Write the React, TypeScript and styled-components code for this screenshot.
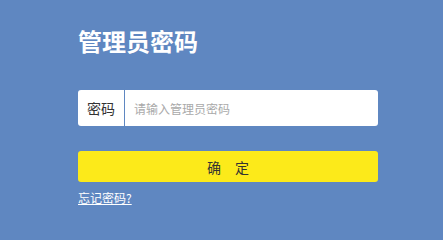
import styled, { createGlobalStyle } from "styled-components";

const GlobalStyle = createGlobalStyle`
  html, body {
    margin: 0;
    padding: 0;
    background-color: #5f87c1;
    font-family: "Noto Sans CJK SC", "Noto Sans", sans-serif;
  }
`;

const Page = styled.div`
  height: 236px;
  padding-left: 78px;
  box-sizing: border-box;
`;

const LoginPanel = styled.div`
  width: 300px;
  padding-top: 27px;
  display: flex;
  flex-direction: column;
  align-items: flex-start;
`;

const Title = styled.h1`
  margin: 0;
  font-size: 24px;
  line-height: 28px;
  font-weight: 700;
  color: #ffffff;
`;

const Field = styled.div`
  margin-top: 35px;
  width: 100%;
  height: 36px;
  display: flex;
  align-items: stretch;
  background-color: #ffffff;
  border-radius: 3px;
  overflow: hidden;
`;

const FieldLabel = styled.label`
  width: 46px;
  flex-shrink: 0;
  display: flex;
  align-items: center;
  justify-content: center;
  border-right: 1px solid #5f87c1;
  font-size: 14px;
  color: #333333;
`;

const PasswordInput = styled.input`
  flex: 1;
  border: none;
  outline: none;
  padding: 0 0 0 9px;
  font-family: inherit;
  font-size: 12px;
  color: #333333;
  background: transparent;

  &::placeholder {
    color: #a9a9a9;
  }
`;

const SubmitButton = styled.button`
  margin-top: 25px;
  width: 100%;
  height: 31px;
  border: none;
  border-radius: 3px;
  background-color: #fcea1a;
  color: #333333;
  font-family: inherit;
  font-size: 14px;
  cursor: pointer;
`;

const ForgotLink = styled.a`
  margin-top: 8px;
  font-size: 12px;
  line-height: 16px;
  color: #ffffff;
  text-decoration: underline;
`;

export default function App() {
  return (
    <>
      <GlobalStyle />
      <Page>
        <LoginPanel>
          <Title>管理员密码</Title>
          <Field>
            <FieldLabel htmlFor="pwd">密码</FieldLabel>
            <PasswordInput id="pwd" type="password" placeholder="请输入管理员密码" />
          </Field>
          <SubmitButton>确　定</SubmitButton>
          <ForgotLink href="#">忘记密码?</ForgotLink>
        </LoginPanel>
      </Page>
    </>
  );
}
